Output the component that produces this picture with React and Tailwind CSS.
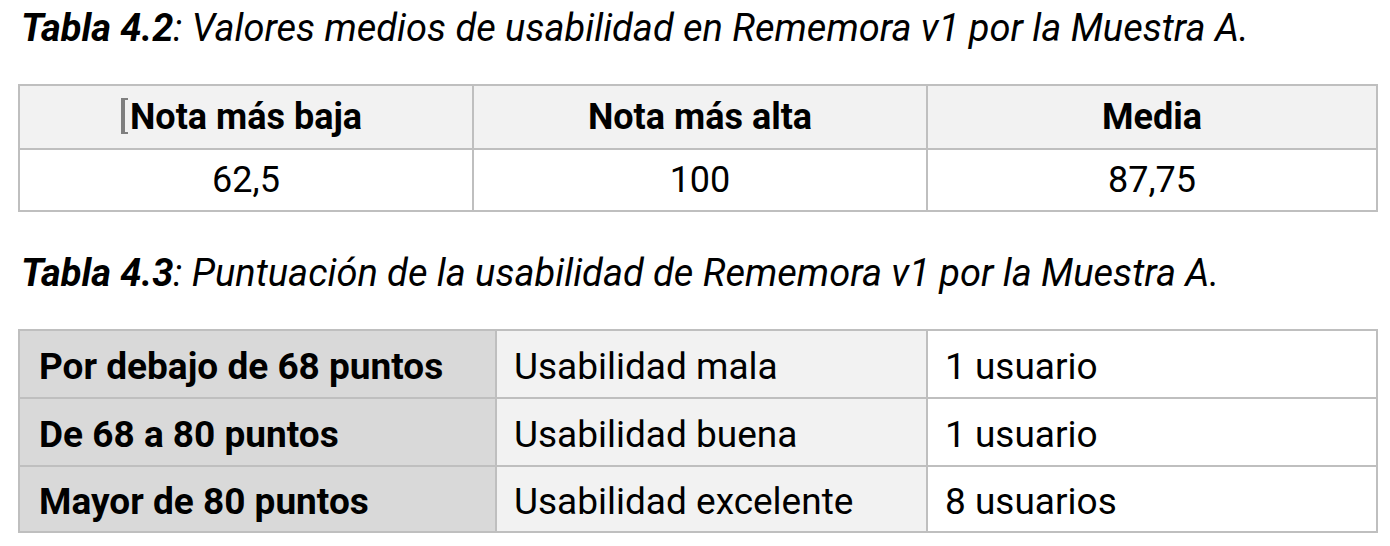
export default function App() {
  const font = "font-['Roboto','Liberation_Sans',sans-serif]";
  const rows = [
    ["Por debajo de 68 puntos", "Usabilidad mala", "1 usuario", "h-[68px] border-b-2"],
    ["De 68 a 80 puntos", "Usabilidad buena", "1 usuario", "h-[68px] border-b-2"],
    ["Mayor de 80 puntos", "Usabilidad excelente", "8 usuarios", "h-[64px]"],
  ];
  return (
    <div className={`w-[1390px] h-[546px] bg-white text-black ${font} overflow-hidden`}>
      <div className="pl-[21px] pt-[6px] text-[38px] leading-[45px] italic whitespace-nowrap">
        <span className="font-bold">Tabla 4.2</span>: Valores medios de usabilidad en Rememora v1 por la Muestra A.
      </div>
      <div className="ml-[18px] mt-[33px] w-[1360px] border-2 border-[#bfbfbf] text-[36px] leading-[42px]">
        <div className="flex h-[64px] bg-[#f2f2f2] border-b-2 border-[#bfbfbf] font-bold">
          <div className="w-[452px] flex items-center justify-center">
            <span className="relative">
              <span className="absolute left-[-9px] top-[2px] w-[7px] h-[36px] border-l-4 border-t-2 border-b-2 border-[#7f7f7f]"></span>
              Nota más baja
            </span>
          </div>
          <div className="w-[454px] flex items-center justify-center border-l-2 border-[#bfbfbf]">Nota más alta</div>
          <div className="flex-1 flex items-center justify-center border-l-2 border-[#bfbfbf]">Media</div>
        </div>
        <div className="flex h-[60px]">
          <div className="w-[452px] flex items-center justify-center">62,5</div>
          <div className="w-[454px] flex items-center justify-center border-l-2 border-[#bfbfbf]">100</div>
          <div className="flex-1 flex items-center justify-center border-l-2 border-[#bfbfbf]">87,75</div>
        </div>
      </div>
      <div className="pl-[21px] mt-[39px] text-[38px] leading-[45px] italic whitespace-nowrap">
        <span className="font-bold">Tabla 4.3</span>: Puntuación de la usabilidad de Rememora v1 por la Muestra A.
      </div>
      <div className="ml-[18px] mt-[33px] w-[1360px] border-2 border-[#bfbfbf] text-[37px] leading-[43px]">
        {rows.map((r, i) => (
          <div key={i} className={`flex border-[#bfbfbf] ${r[3]}`}>
            <div className="w-[475px] flex items-center pl-[19px] pt-[4px] bg-[#d9d9d9] font-bold whitespace-nowrap">{r[0]}</div>
            <div className="w-[431px] flex items-center pl-[17px] pt-[4px] bg-[#f2f2f2] border-l-2 border-[#bfbfbf] whitespace-nowrap">{r[1]}</div>
            <div className="flex-1 flex items-center pl-[17px] pt-[4px] bg-white border-l-2 border-[#bfbfbf] whitespace-nowrap">{r[2]}</div>
          </div>
        ))}
      </div>
    </div>
  );
}
